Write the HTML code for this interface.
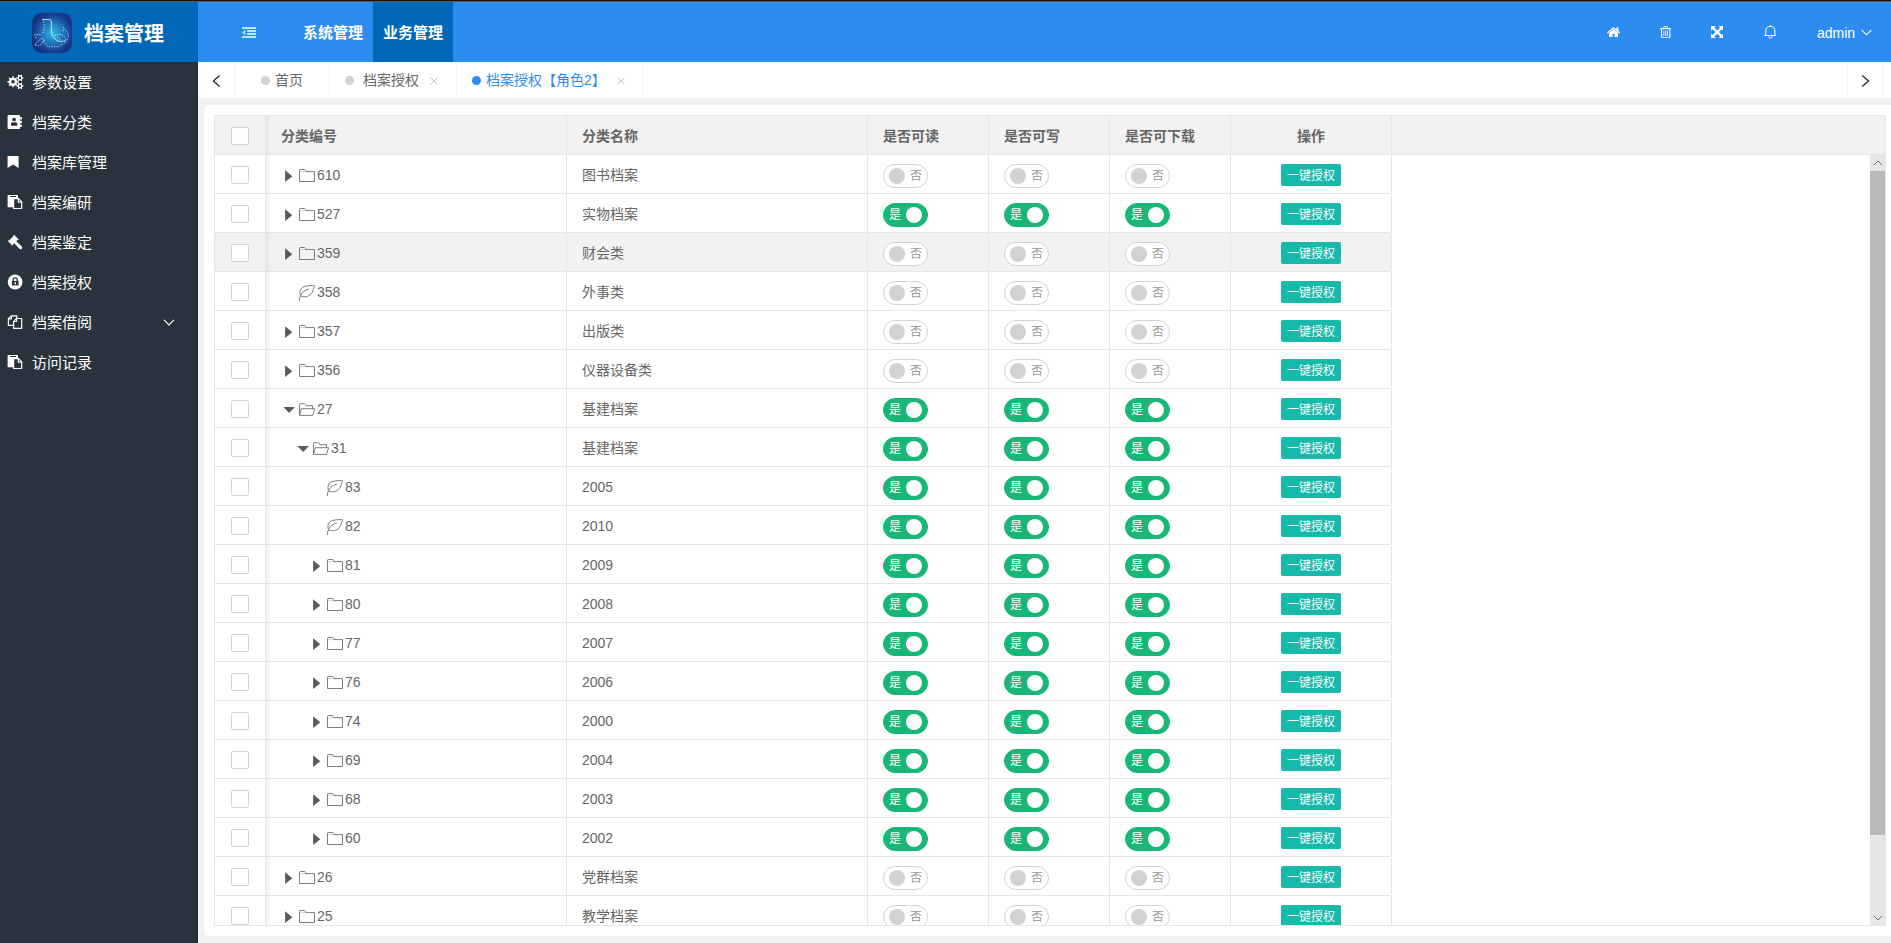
<!DOCTYPE html>
<html lang="zh-CN">
<head>
<meta charset="utf-8">
<title>档案管理</title>
<style>
*{box-sizing:border-box;margin:0;padding:0}
html,body{width:1891px;height:943px;overflow:hidden;background:#f2f2f2}
body{position:relative;font-family:"Liberation Sans","Noto Sans CJK SC",sans-serif;font-size:14px;color:#666;line-height:1}
#topline{position:absolute;left:0;top:0;width:1891px;height:2px;background:linear-gradient(#101010 0,#101010 50%,#5b5a5c 50%,#5b5a5c 100%);z-index:10}
#header{position:absolute;left:0;top:0;width:1891px;height:62px;background:#2d8cf0}
#logo{position:absolute;left:0;top:0;width:198px;height:62px;background:#0068b7}
#logo .ic{position:absolute;left:32px;top:13px;width:40px;height:40px}
#logo .tt{position:absolute;left:84px;top:4px;height:60px;line-height:60px;font-size:20px;font-weight:bold;color:#fff;white-space:nowrap}
.nav{position:absolute;top:2px;height:60px;width:80px;line-height:62px;text-align:center;color:#fff;font-size:15px;font-weight:bold;white-space:nowrap}
.nav.act{background:#0068b7}
.hi{position:absolute}
#admin{position:absolute;left:1817px;top:2px;height:60px;line-height:62px;color:#fff;font-size:14px}
#side{position:absolute;left:0;top:62px;width:198px;height:881px;background:#28333e}
.mi{position:absolute;left:0;width:198px;height:40px;line-height:42px;color:#fff;font-size:15px;padding-left:32px;white-space:nowrap}
.mi svg{position:absolute}
#tabs{position:absolute;left:198px;top:62px;width:1693px;height:36px;background:#fff}
.tab{position:absolute;top:0;height:36px;line-height:36px;border-right:1px solid #f2f2f2;font-size:14px;color:#666;white-space:nowrap}
.tab .dot{position:absolute;top:14px;width:9px;height:9px;border-radius:50%;background:#d2d2d2}
.tab .tx{position:absolute;top:0}
.tab .x{position:absolute;top:14px;width:10px;height:10px}
#card{position:absolute;left:204px;top:105px;width:1700px;height:831px;background:#fff;border-radius:5px 0 0 5px}
#tbl{position:absolute;left:214px;top:115px;width:1672px;height:811px;border:1px solid #e6e6e6;background:#fff;overflow:hidden}
#thead{position:absolute;left:0;top:0;width:1670px;height:39px;background:#f2f2f2;border-bottom:1px solid #e6e6e6}
.th{position:absolute;top:0;height:38px;line-height:40px;font-weight:bold;color:#666;font-size:14px;padding-left:15px;border-right:1px solid #e6e6e6;white-space:nowrap}
#tbody{position:absolute;left:0;top:39px;width:1176px}
.tr{position:relative;height:39px;border-bottom:1px solid #e6e6e6;width:1176px}
.tr.hov{background:#f2f2f2}
.td{position:absolute;top:0;height:38px;line-height:40px;border-right:1px solid #e6e6e6;padding-left:15px;white-space:nowrap;font-size:14px;color:#666}
.c0{left:0;width:51px;padding:0}
.c1{left:51px;width:301px}
.c2{left:352px;width:301px}
.c3{left:653px;width:121px}
.c4{left:774px;width:121px}
.c5{left:895px;width:121px}
.c6{left:1016px;width:161px;padding:0;text-align:center}
.cb{position:absolute;left:16px;top:11px;width:18px;height:18px;border:1px solid #d2d2d2;border-radius:2px;background:#fff}
.ind{display:inline-block;height:1px}
.ta{display:inline-block;width:14px;height:16px;vertical-align:top;margin-top:12px;margin-left:2px}
.ti{display:inline-block;width:16px;height:16px;vertical-align:top;margin-top:12px;margin-left:2px;margin-right:2px}
.code{display:inline-block;vertical-align:top}
.sw{position:absolute;left:15px;top:9px;width:45px;height:24px;border:1px solid #d2d2d2;border-radius:12px;background:#fff}
.sw i{position:absolute;left:5px;top:3px;width:16px;height:16px;border-radius:50%;background:#d2d2d2}
.sw em{position:absolute;left:25px;top:0;width:14px;height:22px;line-height:22px;font-style:normal;font-size:12px;color:#999;text-align:center}
.sw.on{background:#18b778;border-color:#18b778}
.sw.on i{left:22px;background:#fff}
.sw.on em{left:4px;color:#fff}
.btn{display:inline-block;vertical-align:top;margin-top:9px;height:22px;line-height:24px;width:60px;background:#16b9aa;color:#fff;font-size:12px;border-radius:2px;text-align:center}
#shadow{position:absolute;left:51px;top:0;width:5px;height:811px;background:linear-gradient(to right,rgba(0,0,0,.06),rgba(0,0,0,0));pointer-events:none}
#sbar{position:absolute;left:1655px;top:39px;width:16px;height:771px;background:#e6e6e6}
#sbar .thumb{position:absolute;left:0;top:16px;width:15px;height:664px;background:#b8b8b8}
#sbar svg{position:absolute;left:3px;width:10px;height:6px}
</style>
</head>
<body>
<div id="header">
  <div id="logo">
    <svg class="ic" viewBox="0 0 40 40">
      <defs><radialGradient id="lg" cx="52%" cy="50%" r="60%"><stop offset="0" stop-color="#2fb9df"/><stop offset="0.25" stop-color="#2595cf"/><stop offset="0.55" stop-color="#1b62b0"/><stop offset="0.75" stop-color="#183f8f"/><stop offset="1" stop-color="#162c7a"/></radialGradient></defs>
      <rect x="0" y="0" width="40" height="40" rx="10" fill="url(#lg)"/>
      <g fill="none" stroke="#eaf5ff" stroke-width="1" stroke-linecap="round" stroke-dasharray="0.3 2.3">
      <path d="M10.9 6.6 H17.2 Q19.4 6.6 19.4 9 V18.6 Q19.6 22.5 22 25 Q25 28.6 29 28.6 Q31.5 28.4 33.2 27.6" stroke-dasharray="none" stroke-width="0.8"/>
      <path d="M11.2 6.8 Q12 10.6 12.5 14.9 Q11.6 18 10.3 21.2"/>
      <path d="M8 21.5 L2.9 21.8 L4.2 25.5 M9.3 25.7 L4.2 29.7 L2.9 32.4 L6.6 32.6 L8.8 31.6 L11.4 28.6 L12.5 26.5 L9.3 25.7"/>
      <path d="M11.4 28.6 Q13 31 15.1 32.4 Q16.5 33.7 17.8 33.7 H25.7 Q28 33 29.4 31.8 Q32 30.5 33.2 29.2 Q35 27.5 35.8 24.9 Q36.6 23 36.3 22.3 Q35.8 20.5 34.7 18.6 Q33.5 16.5 31.6 14.6 L31 16.4 L32.1 18.6"/>
      <path d="M22.5 22.3 Q24 21.4 25.7 21.5 Q29 21.3 31 22.5 Q33 24 33.7 26.5 M23.6 22.8 L28.4 26.5"/>
      </g>
    </svg>
    <div class="tt">档案管理</div>
  </div>
  <svg class="hi" style="left:242px;top:27px;width:14.3px;height:11px" viewBox="0 0 14.3 11"><path d="M0 0 H14.3 V2 H0 Z M5.1 3 H14.3 V5 H5.1 Z M5.1 6 H14.3 V8 H5.1 Z M0 9 H14.3 V11 H0 Z M0 5.5 L3.3 2.8 V8.2 Z" fill="#b9e9e6"/></svg>
  <div class="nav" style="left:293px">系统管理</div>
  <div class="nav act" style="left:373px">业务管理</div>
  <svg class="hi" style="left:1606.9px;top:27px;width:13.1px;height:10px" viewBox="0 0 13.1 10"><path d="M6.55 0 L0 5.4 L0.8 6.4 L6.55 1.7 L12.3 6.4 L13.1 5.4 L11.4 3.95 V0.2 H9.5 V2.4 Z" fill="#fff"/><path d="M6.55 2.3 L2.1 5.95 V10 H5.5 V7 H7.6 V10 H11 V5.95 Z" fill="#fff"/></svg>
  <svg class="hi" style="left:1659.7px;top:25.9px;width:11.4px;height:12.3px" viewBox="0 0 11.4 12.3"><path d="M0 2.6 H11.4" stroke="#fff" stroke-width="1.1" fill="none"/><path d="M3.9 2.3 V1.2 Q3.9 0.55 4.6 0.55 H6.8 Q7.5 0.55 7.5 1.2 V2.3" stroke="#fff" stroke-width="1" fill="none"/><path d="M1.55 3 V10.8 Q1.55 11.75 2.5 11.75 H8.9 Q9.85 11.75 9.85 10.8 V3" stroke="#fff" stroke-width="1.1" fill="none"/><path d="M3.85 4.6 V10 M5.7 4.6 V10 M7.55 4.6 V10" stroke="#fff" stroke-width="0.85" fill="none"/></svg>
  <svg class="hi" style="left:1710.7px;top:25.9px;width:12.6px;height:12.2px" viewBox="0 0 12 12" preserveAspectRatio="none"><path d="M0 0 H4.8 L3.2 1.6 L6 4.4 L8.8 1.6 L7.2 0 H12 V4.8 L10.4 3.2 L7.6 6 L10.4 8.8 L12 7.2 V12 H7.2 L8.8 10.4 L6 7.6 L3.2 10.4 L4.8 12 H0 V7.2 L1.6 8.8 L4.4 6 L1.6 3.2 L0 4.8 Z" fill="#fff"/></svg>
  <svg class="hi" style="left:1763.8px;top:25px;width:12.6px;height:13.7px" viewBox="0 0 12.6 13.7"><path d="M1.75 10.5 V6 Q1.75 1.4 6.3 1.4 Q10.85 1.4 10.85 6 V10.5" stroke="#fff" stroke-width="1" fill="none"/><path d="M0 10.5 H12.6" stroke="#fff" stroke-width="1" fill="none"/><path d="M6.3 0.1 V1.4" stroke="#fff" stroke-width="1.1" fill="none"/><path d="M4.4 11.3 Q4.6 13.1 6.3 13.1 Q8 13.1 8.2 11.3" stroke="#fff" stroke-width="0.9" fill="none"/></svg>
  <div id="admin">admin</div>
  <svg class="hi" style="left:1861px;top:29px;width:11px;height:8px" viewBox="0 0 11 8"><path d="M0.8 1.2 L5.5 5.8 L10.2 1.2" stroke="#fff" stroke-width="1.1" fill="none"/></svg>
</div>
<div id="topline"></div>

<div id="side">
  <div class="mi" style="top:0"><svg style="left:7px;top:12px;width:17px;height:16px" viewBox="0 0 17 16"><path fill-rule="evenodd" fill="#fff" d="M10.10 6.90 L11.56 7.10 L11.56 8.50 L10.10 8.70 L9.54 10.06 L10.42 11.23 L9.43 12.22 L8.26 11.34 L6.90 11.90 L6.70 13.36 L5.30 13.36 L5.10 11.90 L3.74 11.34 L2.57 12.22 L1.58 11.23 L2.46 10.06 L1.90 8.70 L0.44 8.50 L0.44 7.10 L1.90 6.90 L2.46 5.54 L1.58 4.37 L2.57 3.38 L3.74 4.26 L5.10 3.70 L5.30 2.24 L6.70 2.24 L6.90 3.70 L8.26 4.26 L9.43 3.38 L10.42 4.37 L9.54 5.54 Z M4.20 7.80 A1.8 1.8 0 1 0 7.80 7.80 A1.8 1.8 0 1 0 4.20 7.80 Z M15.38 3.13 L16.44 3.24 L16.44 4.56 L15.38 4.67 L14.86 5.57 L15.29 6.55 L14.15 7.21 L13.52 6.35 L12.48 6.35 L11.85 7.21 L10.71 6.55 L11.14 5.57 L10.62 4.67 L9.56 4.56 L9.56 3.24 L10.62 3.13 L11.14 2.23 L10.71 1.25 L11.85 0.59 L12.48 1.45 L13.52 1.45 L14.15 0.59 L15.29 1.25 L14.86 2.23 Z M11.90 3.90 A1.1 1.1 0 1 0 14.10 3.90 A1.1 1.1 0 1 0 11.90 3.90 Z M15.38 11.13 L16.44 11.24 L16.44 12.56 L15.38 12.67 L14.86 13.57 L15.29 14.55 L14.15 15.21 L13.52 14.35 L12.48 14.35 L11.85 15.21 L10.71 14.55 L11.14 13.57 L10.62 12.67 L9.56 12.56 L9.56 11.24 L10.62 11.13 L11.14 10.23 L10.71 9.25 L11.85 8.59 L12.48 9.45 L13.52 9.45 L14.15 8.59 L15.29 9.25 L14.86 10.23 Z M11.90 11.90 A1.1 1.1 0 1 0 14.10 11.90 A1.1 1.1 0 1 0 11.90 11.90 Z"/></svg>参数设置</div>
  <div class="mi" style="top:40px"><svg style="left:7px;top:13px;width:15px;height:15px" viewBox="0 0 15 15"><rect x="0.6" y="0" width="12.4" height="14.1" rx="1.2" fill="#fff"/><path d="M13 2 H14.3 Q14.9 2 14.9 2.6 V3.9 Q14.9 4.5 14.3 4.5 H13 Z M13 5.8 H14.3 Q14.9 5.8 14.9 6.4 V7.7 Q14.9 8.3 14.3 8.3 H13 Z M13 9.6 H14.3 Q14.9 9.6 14.9 10.2 V11.5 Q14.9 12.1 14.3 12.1 H13 Z" fill="#fff"/><circle cx="7.1" cy="4.5" r="1.85" fill="#28333e"/><path d="M4 10.7 V9 Q4 7.1 5.7 6.9 Q7.1 7.9 8.5 6.9 Q10.3 7.1 10.3 9 V10.7 Z" fill="#28333e"/></svg>档案分类</div>
  <div class="mi" style="top:80px"><svg style="left:7px;top:13px;width:12px;height:14px" viewBox="0 0 12 14"><path d="M0.6 0.9 H11.6 V13.1 L6.1 9.4 L0.6 13.1 Z" fill="#fff"/></svg>档案库管理</div>
  <div class="mi" style="top:120px"><svg style="left:7px;top:13px;width:16px;height:15px" viewBox="0 0 16 15"><path d="M1.2 0 H10.4 Q11 0 11 0.6 V3 H6 V12.2 H1.2 Q0.6 12.2 0.6 11.6 V0.6 Q0.6 0 1.2 0 Z" fill="#fff"/><path d="M3 1.5 H9" stroke="#28333e" stroke-width="1" fill="none"/><path d="M6.6 3.6 H11.6 L14.7 6.9 V13.5 H6.6 Z" fill="#28333e" stroke="#fff" stroke-width="1.2" stroke-linejoin="round"/><path d="M11.3 3.6 V7.1 H14.7" fill="none" stroke="#fff" stroke-width="1.1"/></svg>档案编研</div>
  <div class="mi" style="top:160px"><svg style="left:7px;top:12px;width:16px;height:16px" viewBox="0 0 16 16"><path d="M7.1 0.8 L11.7 5.4 L10.9 6.2 L10.4 5.9 L5.9 10.4 L6.2 10.9 L5.4 11.7 L0.8 7.1 L1.6 6.3 L2.1 6.6 L6.6 2.1 L6.3 1.6 Z" fill="#fff"/><path d="M8.9 8.9 L13.7 13.6" stroke="#fff" stroke-width="3.1" stroke-linecap="round" fill="none"/></svg>档案鉴定</div>
  <div class="mi" style="top:200px"><svg style="left:7px;top:12px;width:16px;height:16px" viewBox="0 0 16 16"><circle cx="8.1" cy="8" r="7.4" fill="#fff"/><path d="M6.2 7.2 V5.8 Q6.2 3.9 8.2 3.9 Q10.2 3.9 10.2 5.8 V7.2" fill="none" stroke="#28333e" stroke-width="1.3"/><rect x="4.9" y="6.9" width="6.7" height="4.6" rx="0.5" fill="#28333e"/><rect x="7.6" y="8" width="1.3" height="2.4" fill="#fff"/></svg>档案授权</div>
  <div class="mi" style="top:240px"><svg style="left:7px;top:13px;width:16px;height:15px" viewBox="0 0 16 15"><path d="M4.2 0.9 H9.8 V10.4 H1.4 V3.7 Z" fill="#28333e" stroke="#fff" stroke-width="1.2" stroke-linejoin="round"/><path d="M4.4 0.9 V3.9 H1.4" fill="none" stroke="#fff" stroke-width="1.1"/><path d="M9.4 3.5 H14.7 V13.4 H6.6 V6.3 Z" fill="#28333e" stroke="#fff" stroke-width="1.2" stroke-linejoin="round"/><path d="M9.6 3.5 V6.5 H6.6" fill="none" stroke="#fff" stroke-width="1.1"/></svg>档案借阅<svg style="left:163px;top:17px;width:12px;height:7px" viewBox="0 0 12 7"><path d="M1 0.9 L6 5.9 L11 0.9" fill="none" stroke="#fff" stroke-width="1.1"/></svg></div>
  <div class="mi" style="top:280px"><svg style="left:7px;top:13px;width:16px;height:15px" viewBox="0 0 16 15"><path d="M1.2 0 H10.4 Q11 0 11 0.6 V3 H6 V12.2 H1.2 Q0.6 12.2 0.6 11.6 V0.6 Q0.6 0 1.2 0 Z" fill="#fff"/><path d="M3 1.5 H9" stroke="#28333e" stroke-width="1" fill="none"/><path d="M6.6 3.6 H11.6 L14.7 6.9 V13.5 H6.6 Z" fill="#28333e" stroke="#fff" stroke-width="1.2" stroke-linejoin="round"/><path d="M11.3 3.6 V7.1 H14.7" fill="none" stroke="#fff" stroke-width="1.1"/></svg>访问记录</div>
</div>

<div id="tabs">
  <div class="tab" style="left:0;width:37px;"><svg style="position:absolute;left:13px;top:13px;width:10px;height:12px" viewBox="0 0 10 12"><path d="M8.6 0.5 L2.4 6 L8.6 11.5" stroke="#222" stroke-width="1.25" fill="none"/></svg></div>
  <div class="tab" style="left:37px;width:95px"><span class="dot" style="left:26px"></span><span class="tx" style="left:40px">首页</span></div>
  <div class="tab" style="left:132px;width:127px"><span class="dot" style="left:15px"></span><span class="tx" style="left:33px">档案授权</span><svg class="x" style="left:99px" viewBox="0 0 10 10"><path d="M1.5 1.5 L8.5 8.5 M8.5 1.5 L1.5 8.5" stroke="#c2c2c2" stroke-width="1" fill="none"/></svg></div>
  <div class="tab" style="left:259px;width:187px;color:#2d8cf0"><span class="dot" style="left:15px;background:#2d8cf0"></span><span class="tx" style="left:29px">档案授权【角色2】</span><svg class="x" style="left:159px" viewBox="0 0 10 10"><path d="M1.5 1.5 L8.5 8.5 M8.5 1.5 L1.5 8.5" stroke="#c2c2c2" stroke-width="1" fill="none"/></svg></div>
  <div class="tab" style="left:1649px;width:36px;border-left:1px solid #f2f2f2"><svg style="position:absolute;left:13px;top:13px;width:10px;height:12px" viewBox="0 0 10 12"><path d="M1.3 0.5 L7.5 6 L1.3 11.5" stroke="#222" stroke-width="1.25" fill="none"/></svg></div>
</div>

<div style="position:absolute;left:197px;top:62px;width:1px;height:881px;background:#1e2a35"></div>
<div style="position:absolute;left:198px;top:62px;width:1px;height:881px;background:#fff"></div>
<div style="position:absolute;left:199px;top:62px;width:1692px;height:1px;background:#f8f8f8"></div>
<div id="card"></div>
<div id="tbl">
  <div id="thead">
    <div class="th" style="left:0;width:51px;padding:0"><span class="cb"></span></div>
    <div class="th" style="left:51px;width:301px">分类编号</div>
    <div class="th" style="left:352px;width:301px">分类名称</div>
    <div class="th" style="left:653px;width:121px">是否可读</div>
    <div class="th" style="left:774px;width:121px">是否可写</div>
    <div class="th" style="left:895px;width:121px">是否可下载</div>
    <div class="th" style="left:1016px;width:161px;padding:0;text-align:center">操作</div>
  </div>
  <div id="tbody">
<div class="tr">
<div class="td c0"><span class="cb"></span></div>
<div class="td c1"><span class="ind" style="width:0px"></span><svg class="ta" viewBox="0 0 14 16"><path d="M2.1 3.3 L9.3 9.15 L2.1 15 Z" fill="#5a5a5a"/></svg><svg class="ti" viewBox="0 0 16 16"><path d="M0.5 3.3 Q0.5 2.5 1.3 2.5 H5.4 Q6.2 2.5 6.5 3.3 L6.9 4.6 H15.5 V14.5 H0.5 Z" fill="none" stroke="#707070" stroke-width="0.92"/><path d="M1 4.6 H6.9" stroke="#666" stroke-width="0.5" fill="none" opacity=".55"/></svg><span class="code">610</span></div>
<div class="td c2">图书档案</div>
<div class="td c3"><div class="sw"><em>否</em><i></i></div></div>
<div class="td c4"><div class="sw"><em>否</em><i></i></div></div>
<div class="td c5"><div class="sw"><em>否</em><i></i></div></div>
<div class="td c6"><span class="btn">一键授权</span></div>
</div>
<div class="tr">
<div class="td c0"><span class="cb"></span></div>
<div class="td c1"><span class="ind" style="width:0px"></span><svg class="ta" viewBox="0 0 14 16"><path d="M2.1 3.3 L9.3 9.15 L2.1 15 Z" fill="#5a5a5a"/></svg><svg class="ti" viewBox="0 0 16 16"><path d="M0.5 3.3 Q0.5 2.5 1.3 2.5 H5.4 Q6.2 2.5 6.5 3.3 L6.9 4.6 H15.5 V14.5 H0.5 Z" fill="none" stroke="#707070" stroke-width="0.92"/><path d="M1 4.6 H6.9" stroke="#666" stroke-width="0.5" fill="none" opacity=".55"/></svg><span class="code">527</span></div>
<div class="td c2">实物档案</div>
<div class="td c3"><div class="sw on"><em>是</em><i></i></div></div>
<div class="td c4"><div class="sw on"><em>是</em><i></i></div></div>
<div class="td c5"><div class="sw on"><em>是</em><i></i></div></div>
<div class="td c6"><span class="btn">一键授权</span></div>
</div>
<div class="tr hov">
<div class="td c0"><span class="cb"></span></div>
<div class="td c1"><span class="ind" style="width:0px"></span><svg class="ta" viewBox="0 0 14 16"><path d="M2.1 3.3 L9.3 9.15 L2.1 15 Z" fill="#5a5a5a"/></svg><svg class="ti" viewBox="0 0 16 16"><path d="M0.5 3.3 Q0.5 2.5 1.3 2.5 H5.4 Q6.2 2.5 6.5 3.3 L6.9 4.6 H15.5 V14.5 H0.5 Z" fill="none" stroke="#707070" stroke-width="0.92"/><path d="M1 4.6 H6.9" stroke="#666" stroke-width="0.5" fill="none" opacity=".55"/></svg><span class="code">359</span></div>
<div class="td c2">财会类</div>
<div class="td c3"><div class="sw"><em>否</em><i></i></div></div>
<div class="td c4"><div class="sw"><em>否</em><i></i></div></div>
<div class="td c5"><div class="sw"><em>否</em><i></i></div></div>
<div class="td c6"><span class="btn">一键授权</span></div>
</div>
<div class="tr">
<div class="td c0"><span class="cb"></span></div>
<div class="td c1"><span class="ind" style="width:0px"></span><span class="ta"></span><svg class="ti" style="margin-top:13px" viewBox="0 0 16 16"><path d="M15.5 0.5 C15.5 0.5 9.5 0.3 5.2 1.6 C1.2 3 0.3 6.6 1.5 10.8 C5 12.4 9.6 12.2 12.3 8.6 C14.4 5.6 15.5 0.5 15.5 0.5 Z" fill="none" stroke="#707070" stroke-width="0.92"/><path d="M0.4 16 C0.2 11 3 6 9.8 4" fill="none" stroke="#707070" stroke-width="0.92"/></svg><span class="code">358</span></div>
<div class="td c2">外事类</div>
<div class="td c3"><div class="sw"><em>否</em><i></i></div></div>
<div class="td c4"><div class="sw"><em>否</em><i></i></div></div>
<div class="td c5"><div class="sw"><em>否</em><i></i></div></div>
<div class="td c6"><span class="btn">一键授权</span></div>
</div>
<div class="tr">
<div class="td c0"><span class="cb"></span></div>
<div class="td c1"><span class="ind" style="width:0px"></span><svg class="ta" viewBox="0 0 14 16"><path d="M2.1 3.3 L9.3 9.15 L2.1 15 Z" fill="#5a5a5a"/></svg><svg class="ti" viewBox="0 0 16 16"><path d="M0.5 3.3 Q0.5 2.5 1.3 2.5 H5.4 Q6.2 2.5 6.5 3.3 L6.9 4.6 H15.5 V14.5 H0.5 Z" fill="none" stroke="#707070" stroke-width="0.92"/><path d="M1 4.6 H6.9" stroke="#666" stroke-width="0.5" fill="none" opacity=".55"/></svg><span class="code">357</span></div>
<div class="td c2">出版类</div>
<div class="td c3"><div class="sw"><em>否</em><i></i></div></div>
<div class="td c4"><div class="sw"><em>否</em><i></i></div></div>
<div class="td c5"><div class="sw"><em>否</em><i></i></div></div>
<div class="td c6"><span class="btn">一键授权</span></div>
</div>
<div class="tr">
<div class="td c0"><span class="cb"></span></div>
<div class="td c1"><span class="ind" style="width:0px"></span><svg class="ta" viewBox="0 0 14 16"><path d="M2.1 3.3 L9.3 9.15 L2.1 15 Z" fill="#5a5a5a"/></svg><svg class="ti" viewBox="0 0 16 16"><path d="M0.5 3.3 Q0.5 2.5 1.3 2.5 H5.4 Q6.2 2.5 6.5 3.3 L6.9 4.6 H15.5 V14.5 H0.5 Z" fill="none" stroke="#707070" stroke-width="0.92"/><path d="M1 4.6 H6.9" stroke="#666" stroke-width="0.5" fill="none" opacity=".55"/></svg><span class="code">356</span></div>
<div class="td c2">仪器设备类</div>
<div class="td c3"><div class="sw"><em>否</em><i></i></div></div>
<div class="td c4"><div class="sw"><em>否</em><i></i></div></div>
<div class="td c5"><div class="sw"><em>否</em><i></i></div></div>
<div class="td c6"><span class="btn">一键授权</span></div>
</div>
<div class="tr">
<div class="td c0"><span class="cb"></span></div>
<div class="td c1"><span class="ind" style="width:0px"></span><svg class="ta" viewBox="0 0 14 16"><path d="M0.4 6 H11.9 L6.15 12 Z" fill="#5a5a5a"/></svg><svg class="ti" viewBox="0 0 16 16"><path d="M0.5 14.4 V3.5 Q0.5 2.7 1.3 2.7 H5.4 Q6.2 2.7 6.5 3.5 L6.9 4.7 H13.5 V7.7" fill="none" stroke="#707070" stroke-width="0.92"/><path d="M0.6 14.4 L2.4 7.7 H15.6 L13.6 14.4 Z" fill="none" stroke="#707070" stroke-width="0.92"/></svg><span class="code">27</span></div>
<div class="td c2">基建档案</div>
<div class="td c3"><div class="sw on"><em>是</em><i></i></div></div>
<div class="td c4"><div class="sw on"><em>是</em><i></i></div></div>
<div class="td c5"><div class="sw on"><em>是</em><i></i></div></div>
<div class="td c6"><span class="btn">一键授权</span></div>
</div>
<div class="tr">
<div class="td c0"><span class="cb"></span></div>
<div class="td c1"><span class="ind" style="width:14px"></span><svg class="ta" viewBox="0 0 14 16"><path d="M0.4 6 H11.9 L6.15 12 Z" fill="#5a5a5a"/></svg><svg class="ti" viewBox="0 0 16 16"><path d="M0.5 14.4 V3.5 Q0.5 2.7 1.3 2.7 H5.4 Q6.2 2.7 6.5 3.5 L6.9 4.7 H13.5 V7.7" fill="none" stroke="#707070" stroke-width="0.92"/><path d="M0.6 14.4 L2.4 7.7 H15.6 L13.6 14.4 Z" fill="none" stroke="#707070" stroke-width="0.92"/></svg><span class="code">31</span></div>
<div class="td c2">基建档案</div>
<div class="td c3"><div class="sw on"><em>是</em><i></i></div></div>
<div class="td c4"><div class="sw on"><em>是</em><i></i></div></div>
<div class="td c5"><div class="sw on"><em>是</em><i></i></div></div>
<div class="td c6"><span class="btn">一键授权</span></div>
</div>
<div class="tr">
<div class="td c0"><span class="cb"></span></div>
<div class="td c1"><span class="ind" style="width:28px"></span><span class="ta"></span><svg class="ti" style="margin-top:13px" viewBox="0 0 16 16"><path d="M15.5 0.5 C15.5 0.5 9.5 0.3 5.2 1.6 C1.2 3 0.3 6.6 1.5 10.8 C5 12.4 9.6 12.2 12.3 8.6 C14.4 5.6 15.5 0.5 15.5 0.5 Z" fill="none" stroke="#707070" stroke-width="0.92"/><path d="M0.4 16 C0.2 11 3 6 9.8 4" fill="none" stroke="#707070" stroke-width="0.92"/></svg><span class="code">83</span></div>
<div class="td c2">2005</div>
<div class="td c3"><div class="sw on"><em>是</em><i></i></div></div>
<div class="td c4"><div class="sw on"><em>是</em><i></i></div></div>
<div class="td c5"><div class="sw on"><em>是</em><i></i></div></div>
<div class="td c6"><span class="btn">一键授权</span></div>
</div>
<div class="tr">
<div class="td c0"><span class="cb"></span></div>
<div class="td c1"><span class="ind" style="width:28px"></span><span class="ta"></span><svg class="ti" style="margin-top:13px" viewBox="0 0 16 16"><path d="M15.5 0.5 C15.5 0.5 9.5 0.3 5.2 1.6 C1.2 3 0.3 6.6 1.5 10.8 C5 12.4 9.6 12.2 12.3 8.6 C14.4 5.6 15.5 0.5 15.5 0.5 Z" fill="none" stroke="#707070" stroke-width="0.92"/><path d="M0.4 16 C0.2 11 3 6 9.8 4" fill="none" stroke="#707070" stroke-width="0.92"/></svg><span class="code">82</span></div>
<div class="td c2">2010</div>
<div class="td c3"><div class="sw on"><em>是</em><i></i></div></div>
<div class="td c4"><div class="sw on"><em>是</em><i></i></div></div>
<div class="td c5"><div class="sw on"><em>是</em><i></i></div></div>
<div class="td c6"><span class="btn">一键授权</span></div>
</div>
<div class="tr">
<div class="td c0"><span class="cb"></span></div>
<div class="td c1"><span class="ind" style="width:28px"></span><svg class="ta" viewBox="0 0 14 16"><path d="M2.1 3.3 L9.3 9.15 L2.1 15 Z" fill="#5a5a5a"/></svg><svg class="ti" viewBox="0 0 16 16"><path d="M0.5 3.3 Q0.5 2.5 1.3 2.5 H5.4 Q6.2 2.5 6.5 3.3 L6.9 4.6 H15.5 V14.5 H0.5 Z" fill="none" stroke="#707070" stroke-width="0.92"/><path d="M1 4.6 H6.9" stroke="#666" stroke-width="0.5" fill="none" opacity=".55"/></svg><span class="code">81</span></div>
<div class="td c2">2009</div>
<div class="td c3"><div class="sw on"><em>是</em><i></i></div></div>
<div class="td c4"><div class="sw on"><em>是</em><i></i></div></div>
<div class="td c5"><div class="sw on"><em>是</em><i></i></div></div>
<div class="td c6"><span class="btn">一键授权</span></div>
</div>
<div class="tr">
<div class="td c0"><span class="cb"></span></div>
<div class="td c1"><span class="ind" style="width:28px"></span><svg class="ta" viewBox="0 0 14 16"><path d="M2.1 3.3 L9.3 9.15 L2.1 15 Z" fill="#5a5a5a"/></svg><svg class="ti" viewBox="0 0 16 16"><path d="M0.5 3.3 Q0.5 2.5 1.3 2.5 H5.4 Q6.2 2.5 6.5 3.3 L6.9 4.6 H15.5 V14.5 H0.5 Z" fill="none" stroke="#707070" stroke-width="0.92"/><path d="M1 4.6 H6.9" stroke="#666" stroke-width="0.5" fill="none" opacity=".55"/></svg><span class="code">80</span></div>
<div class="td c2">2008</div>
<div class="td c3"><div class="sw on"><em>是</em><i></i></div></div>
<div class="td c4"><div class="sw on"><em>是</em><i></i></div></div>
<div class="td c5"><div class="sw on"><em>是</em><i></i></div></div>
<div class="td c6"><span class="btn">一键授权</span></div>
</div>
<div class="tr">
<div class="td c0"><span class="cb"></span></div>
<div class="td c1"><span class="ind" style="width:28px"></span><svg class="ta" viewBox="0 0 14 16"><path d="M2.1 3.3 L9.3 9.15 L2.1 15 Z" fill="#5a5a5a"/></svg><svg class="ti" viewBox="0 0 16 16"><path d="M0.5 3.3 Q0.5 2.5 1.3 2.5 H5.4 Q6.2 2.5 6.5 3.3 L6.9 4.6 H15.5 V14.5 H0.5 Z" fill="none" stroke="#707070" stroke-width="0.92"/><path d="M1 4.6 H6.9" stroke="#666" stroke-width="0.5" fill="none" opacity=".55"/></svg><span class="code">77</span></div>
<div class="td c2">2007</div>
<div class="td c3"><div class="sw on"><em>是</em><i></i></div></div>
<div class="td c4"><div class="sw on"><em>是</em><i></i></div></div>
<div class="td c5"><div class="sw on"><em>是</em><i></i></div></div>
<div class="td c6"><span class="btn">一键授权</span></div>
</div>
<div class="tr">
<div class="td c0"><span class="cb"></span></div>
<div class="td c1"><span class="ind" style="width:28px"></span><svg class="ta" viewBox="0 0 14 16"><path d="M2.1 3.3 L9.3 9.15 L2.1 15 Z" fill="#5a5a5a"/></svg><svg class="ti" viewBox="0 0 16 16"><path d="M0.5 3.3 Q0.5 2.5 1.3 2.5 H5.4 Q6.2 2.5 6.5 3.3 L6.9 4.6 H15.5 V14.5 H0.5 Z" fill="none" stroke="#707070" stroke-width="0.92"/><path d="M1 4.6 H6.9" stroke="#666" stroke-width="0.5" fill="none" opacity=".55"/></svg><span class="code">76</span></div>
<div class="td c2">2006</div>
<div class="td c3"><div class="sw on"><em>是</em><i></i></div></div>
<div class="td c4"><div class="sw on"><em>是</em><i></i></div></div>
<div class="td c5"><div class="sw on"><em>是</em><i></i></div></div>
<div class="td c6"><span class="btn">一键授权</span></div>
</div>
<div class="tr">
<div class="td c0"><span class="cb"></span></div>
<div class="td c1"><span class="ind" style="width:28px"></span><svg class="ta" viewBox="0 0 14 16"><path d="M2.1 3.3 L9.3 9.15 L2.1 15 Z" fill="#5a5a5a"/></svg><svg class="ti" viewBox="0 0 16 16"><path d="M0.5 3.3 Q0.5 2.5 1.3 2.5 H5.4 Q6.2 2.5 6.5 3.3 L6.9 4.6 H15.5 V14.5 H0.5 Z" fill="none" stroke="#707070" stroke-width="0.92"/><path d="M1 4.6 H6.9" stroke="#666" stroke-width="0.5" fill="none" opacity=".55"/></svg><span class="code">74</span></div>
<div class="td c2">2000</div>
<div class="td c3"><div class="sw on"><em>是</em><i></i></div></div>
<div class="td c4"><div class="sw on"><em>是</em><i></i></div></div>
<div class="td c5"><div class="sw on"><em>是</em><i></i></div></div>
<div class="td c6"><span class="btn">一键授权</span></div>
</div>
<div class="tr">
<div class="td c0"><span class="cb"></span></div>
<div class="td c1"><span class="ind" style="width:28px"></span><svg class="ta" viewBox="0 0 14 16"><path d="M2.1 3.3 L9.3 9.15 L2.1 15 Z" fill="#5a5a5a"/></svg><svg class="ti" viewBox="0 0 16 16"><path d="M0.5 3.3 Q0.5 2.5 1.3 2.5 H5.4 Q6.2 2.5 6.5 3.3 L6.9 4.6 H15.5 V14.5 H0.5 Z" fill="none" stroke="#707070" stroke-width="0.92"/><path d="M1 4.6 H6.9" stroke="#666" stroke-width="0.5" fill="none" opacity=".55"/></svg><span class="code">69</span></div>
<div class="td c2">2004</div>
<div class="td c3"><div class="sw on"><em>是</em><i></i></div></div>
<div class="td c4"><div class="sw on"><em>是</em><i></i></div></div>
<div class="td c5"><div class="sw on"><em>是</em><i></i></div></div>
<div class="td c6"><span class="btn">一键授权</span></div>
</div>
<div class="tr">
<div class="td c0"><span class="cb"></span></div>
<div class="td c1"><span class="ind" style="width:28px"></span><svg class="ta" viewBox="0 0 14 16"><path d="M2.1 3.3 L9.3 9.15 L2.1 15 Z" fill="#5a5a5a"/></svg><svg class="ti" viewBox="0 0 16 16"><path d="M0.5 3.3 Q0.5 2.5 1.3 2.5 H5.4 Q6.2 2.5 6.5 3.3 L6.9 4.6 H15.5 V14.5 H0.5 Z" fill="none" stroke="#707070" stroke-width="0.92"/><path d="M1 4.6 H6.9" stroke="#666" stroke-width="0.5" fill="none" opacity=".55"/></svg><span class="code">68</span></div>
<div class="td c2">2003</div>
<div class="td c3"><div class="sw on"><em>是</em><i></i></div></div>
<div class="td c4"><div class="sw on"><em>是</em><i></i></div></div>
<div class="td c5"><div class="sw on"><em>是</em><i></i></div></div>
<div class="td c6"><span class="btn">一键授权</span></div>
</div>
<div class="tr">
<div class="td c0"><span class="cb"></span></div>
<div class="td c1"><span class="ind" style="width:28px"></span><svg class="ta" viewBox="0 0 14 16"><path d="M2.1 3.3 L9.3 9.15 L2.1 15 Z" fill="#5a5a5a"/></svg><svg class="ti" viewBox="0 0 16 16"><path d="M0.5 3.3 Q0.5 2.5 1.3 2.5 H5.4 Q6.2 2.5 6.5 3.3 L6.9 4.6 H15.5 V14.5 H0.5 Z" fill="none" stroke="#707070" stroke-width="0.92"/><path d="M1 4.6 H6.9" stroke="#666" stroke-width="0.5" fill="none" opacity=".55"/></svg><span class="code">60</span></div>
<div class="td c2">2002</div>
<div class="td c3"><div class="sw on"><em>是</em><i></i></div></div>
<div class="td c4"><div class="sw on"><em>是</em><i></i></div></div>
<div class="td c5"><div class="sw on"><em>是</em><i></i></div></div>
<div class="td c6"><span class="btn">一键授权</span></div>
</div>
<div class="tr">
<div class="td c0"><span class="cb"></span></div>
<div class="td c1"><span class="ind" style="width:0px"></span><svg class="ta" viewBox="0 0 14 16"><path d="M2.1 3.3 L9.3 9.15 L2.1 15 Z" fill="#5a5a5a"/></svg><svg class="ti" viewBox="0 0 16 16"><path d="M0.5 3.3 Q0.5 2.5 1.3 2.5 H5.4 Q6.2 2.5 6.5 3.3 L6.9 4.6 H15.5 V14.5 H0.5 Z" fill="none" stroke="#707070" stroke-width="0.92"/><path d="M1 4.6 H6.9" stroke="#666" stroke-width="0.5" fill="none" opacity=".55"/></svg><span class="code">26</span></div>
<div class="td c2">党群档案</div>
<div class="td c3"><div class="sw"><em>否</em><i></i></div></div>
<div class="td c4"><div class="sw"><em>否</em><i></i></div></div>
<div class="td c5"><div class="sw"><em>否</em><i></i></div></div>
<div class="td c6"><span class="btn">一键授权</span></div>
</div>
<div class="tr">
<div class="td c0"><span class="cb"></span></div>
<div class="td c1"><span class="ind" style="width:0px"></span><svg class="ta" viewBox="0 0 14 16"><path d="M2.1 3.3 L9.3 9.15 L2.1 15 Z" fill="#5a5a5a"/></svg><svg class="ti" viewBox="0 0 16 16"><path d="M0.5 3.3 Q0.5 2.5 1.3 2.5 H5.4 Q6.2 2.5 6.5 3.3 L6.9 4.6 H15.5 V14.5 H0.5 Z" fill="none" stroke="#707070" stroke-width="0.92"/><path d="M1 4.6 H6.9" stroke="#666" stroke-width="0.5" fill="none" opacity=".55"/></svg><span class="code">25</span></div>
<div class="td c2">教学档案</div>
<div class="td c3"><div class="sw"><em>否</em><i></i></div></div>
<div class="td c4"><div class="sw"><em>否</em><i></i></div></div>
<div class="td c5"><div class="sw"><em>否</em><i></i></div></div>
<div class="td c6"><span class="btn">一键授权</span></div>
</div>
  </div>
  <div id="shadow"></div>
  <div id="sbar"><svg style="top:5px" viewBox="0 0 10 6"><path d="M0.8 5.2 L5 1 L9.2 5.2" stroke="#707070" stroke-width="1" fill="none"/></svg><div class="thumb"></div><svg style="top:760px" viewBox="0 0 10 6"><path d="M0.8 0.8 L5 5 L9.2 0.8" stroke="#707070" stroke-width="1" fill="none"/></svg></div>
</div>
</body>
</html>
